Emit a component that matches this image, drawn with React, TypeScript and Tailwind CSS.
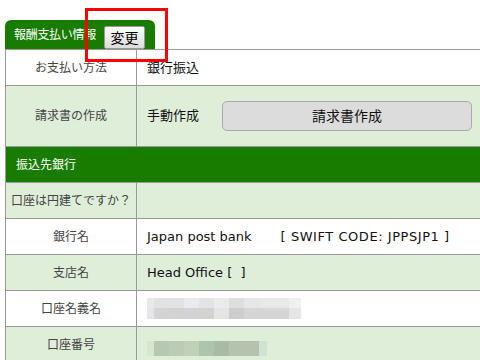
import React from "react";

const row7Top = [
  "w-[7px] bg-[#e8e8ea]",
  "w-[30px] bg-[#e2e2e5]",
  "w-[15px] bg-[#eaeaee]",
  "w-[15px] bg-[#e3e3e6]",
  "w-[15px] bg-[#ebebeb]",
  "w-[15px] bg-[#dedee1]",
  "w-[15px] bg-[#e6e6e9]",
  "w-[30px] bg-[#e8e8e8]",
  "w-[12px] bg-[#efefef]",
];
const row7Bottom = [
  "w-[7px] bg-[#e5e5ea]",
  "w-[15px] bg-[#d5d3d3]",
  "w-[15px] bg-[#d1d2d2]",
  "w-[15px] bg-[#d3d2d8]",
  "w-[15px] bg-[#d2d2ce]",
  "w-[15px] bg-[#e5e5e5]",
  "w-[15px] bg-[#cdcdcd]",
  "w-[45px] bg-[#d5d5d5]",
  "w-[12px] bg-[#e5e5e8]",
];
const row8 = [
  "w-[7px] bg-[#d8e6cf]",
  "w-[15px] bg-[#b5c8b0]",
  "w-[15px] bg-[#bccbb7]",
  "w-[15px] bg-[#c2d0b8]",
  "w-[15px] bg-[#adc4ad]",
  "w-[15px] bg-[#a9bba6]",
  "w-[30px] bg-[#b5c2ad]",
  "w-[8px] bg-[#d0e3d2]",
];

function Row({
  label,
  children,
  alt,
  h = "h-[36px]",
  left = false,
}: {
  label: string;
  children?: React.ReactNode;
  alt?: boolean;
  h?: string;
  left?: boolean;
}) {
  return (
    <div
      className={`flex ${h} border-b border-[#999] ${alt ? "bg-[#dfeed9]" : "bg-white"}`}
    >
      <div
        className={`w-[131px] shrink-0 border-r border-[#999] flex items-center text-[12px] text-[#444] ${
          left ? "justify-start pl-[5px]" : "justify-center"
        }`}
      >
        {label}
      </div>
      <div className="flex-1 flex items-center pl-[10px] text-[13px] text-[#111]">
        {children}
      </div>
    </div>
  );
}

export default function App() {
  return (
    <div
      className="w-[480px] h-[360px] overflow-hidden bg-white relative"
      style={{ fontFamily: '"DejaVu Sans", "Noto Sans CJK JP", sans-serif' }}
    >
      <div className="pl-[5px] pt-[20px]">
        <div className="w-[150px] h-[29px] bg-[#177c00] rounded-t-[6px] flex items-center pl-[9px]">
          <span className="text-white text-[12px] tracking-[-0.3px]">報酬支払い情報</span>
          <button className="ml-[8px] mt-[6px] h-[23px] w-[41px] border border-[#999] rounded-[2px] bg-gradient-to-b from-white to-[#dcdcdc] text-[14px] text-black flex items-center justify-center leading-none">
            変更
          </button>
        </div>
        <div className="w-[520px] border-l border-t border-[#999]">
          <Row label="お支払い方法">銀行振込</Row>
          <Row label="請求書の作成" alt h="h-[61px]">
            <span>手動作成</span>
            <button className="ml-[23px] w-[250px] h-[30px] rounded-[5px] border border-[#aaa] bg-[#dcdcdc] text-[14px] text-[#111] flex items-center justify-center">
              請求書作成
            </button>
          </Row>
          <div className="h-[36px] border-b border-[#999] bg-[#177c00] flex items-center pl-[10px] text-white text-[12px]">
            振込先銀行
          </div>
          <Row label="口座は円建てですか？" alt left />
          <Row label="銀行名">
            <span>Japan post bank</span>
            <span className="ml-[29px] tracking-[0.55px]">[ SWIFT CODE: JPPSJP1 ]</span>
          </Row>
          <Row label="支店名" alt>
            Head Office [&nbsp;&nbsp;]
          </Row>
          <Row label="口座名義名">
            <div className="flex flex-col">
              <div className="flex h-[10px]">
                {row7Top.map((c, i) => (
                  <div key={i} className={c} />
                ))}
              </div>
              <div className="flex h-[11px]">
                {row7Bottom.map((c, i) => (
                  <div key={i} className={c} />
                ))}
              </div>
            </div>
          </Row>
          <Row label="口座番号" alt>
            <div className="flex h-[15px] mt-[8px]">
              {row8.map((c, i) => (
                <div key={i} className={c} />
              ))}
            </div>
          </Row>
        </div>
      </div>
      <div className="absolute left-[85px] top-[8px] w-[83px] h-[54px] border-[3px] border-[#ff0000]" />
    </div>
  );
}
